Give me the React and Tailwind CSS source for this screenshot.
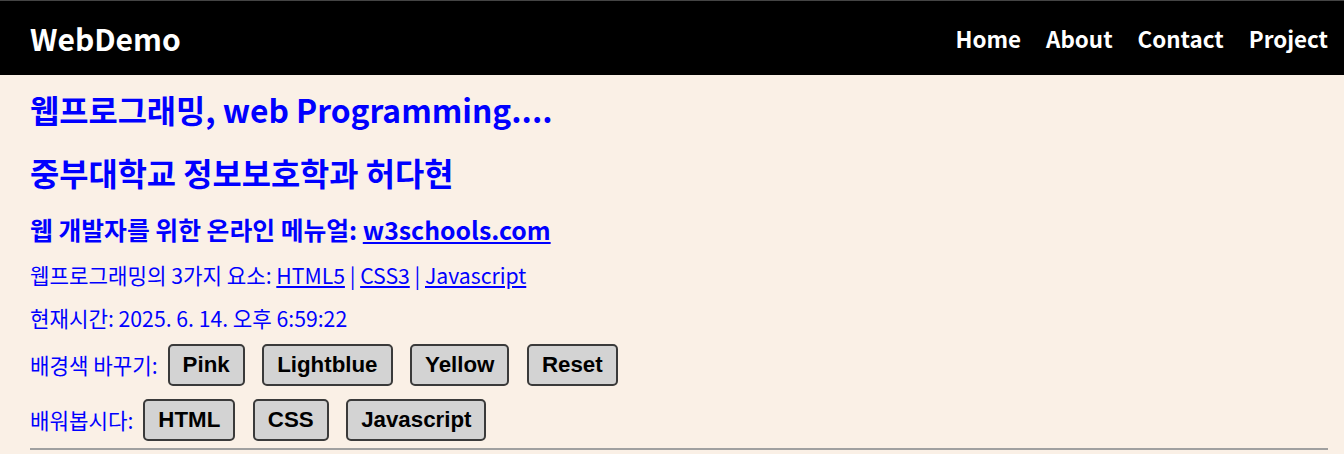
const font = { fontFamily: '"Noto Sans CJK KR", "Noto Sans", sans-serif' };

function Btn({ children }) {
  return (
    <button
      className="h-[42px] rounded-[5px] border-2 border-[#3a3a3a] bg-[#d3d3d3] px-[13px] text-[22.3px] font-bold text-black"
      style={{ fontFamily: '"Liberation Sans", Arial, sans-serif' }}
    >
      {children}
    </button>
  );
}

export default function App() {
  const nav = ["Home", "About", "Contact", "Project"];

  return (
    <div className="min-h-[454px] bg-[#faf0e6] text-[#0000ff]" style={font}>
      <header className="flex h-[75px] items-center justify-between border-t border-[#444] bg-black pl-[30px] pr-[16px] text-white">
        <div className="text-[30px] font-bold leading-none">WebDemo</div>
        <nav className="mt-[2px] flex gap-[25px] text-[22.4px] font-bold">
          {nav.map((n) => (
            <span key={n}>{n}</span>
          ))}
        </nav>
      </header>

      <main className="pl-[30px] pr-[16px]">
        <h1 className="flex h-[70px] items-center text-[31.75px] font-bold">
          웹프로그래밍, web Programming....
        </h1>
        <h2 className="flex h-[56px] items-center text-[31.75px] font-bold">
          중부대학교 정보보호학과 허다현
        </h2>
        <h3 className="flex h-[58px] items-center text-[24.8px] font-bold">
          웹 개발자를 위한 온라인 메뉴얼:&nbsp;
          <a href="#" className="underline">w3schools.com</a>
        </h3>
        <p className="flex h-[32px] items-center text-[21.2px]">
          웹프로그래밍의 3가지 요소:&nbsp;
          <a href="#" className="underline">HTML5</a>&nbsp;|&nbsp;
          <a href="#" className="underline">CSS3</a>&nbsp;|&nbsp;
          <a href="#" className="underline">Javascript</a>
        </p>
        <p className="flex h-[53px] items-center text-[21.2px]">
          현재시간: 2025. 6. 14. 오후 6:59:22
        </p>
        <div className="flex h-[42px] items-center text-[21.2px]">
          <span className="mr-[10px]">배경색 바꾸기:</span>
          <div className="flex gap-[17.5px]">
            <Btn>Pink</Btn>
            <Btn>Lightblue</Btn>
            <Btn>Yellow</Btn>
            <Btn>Reset</Btn>
          </div>
        </div>
        <div className="mt-[13px] flex h-[42px] items-center text-[21.2px]">
          <span className="mr-[10px]">배워봅시다:</span>
          <div className="flex gap-[17.5px]">
            <Btn>HTML</Btn>
            <Btn>CSS</Btn>
            <Btn>Javascript</Btn>
          </div>
        </div>
        <hr className="mt-[7px] border-t-2 border-[#a0a0a0]" />
      </main>
    </div>
  );
}
